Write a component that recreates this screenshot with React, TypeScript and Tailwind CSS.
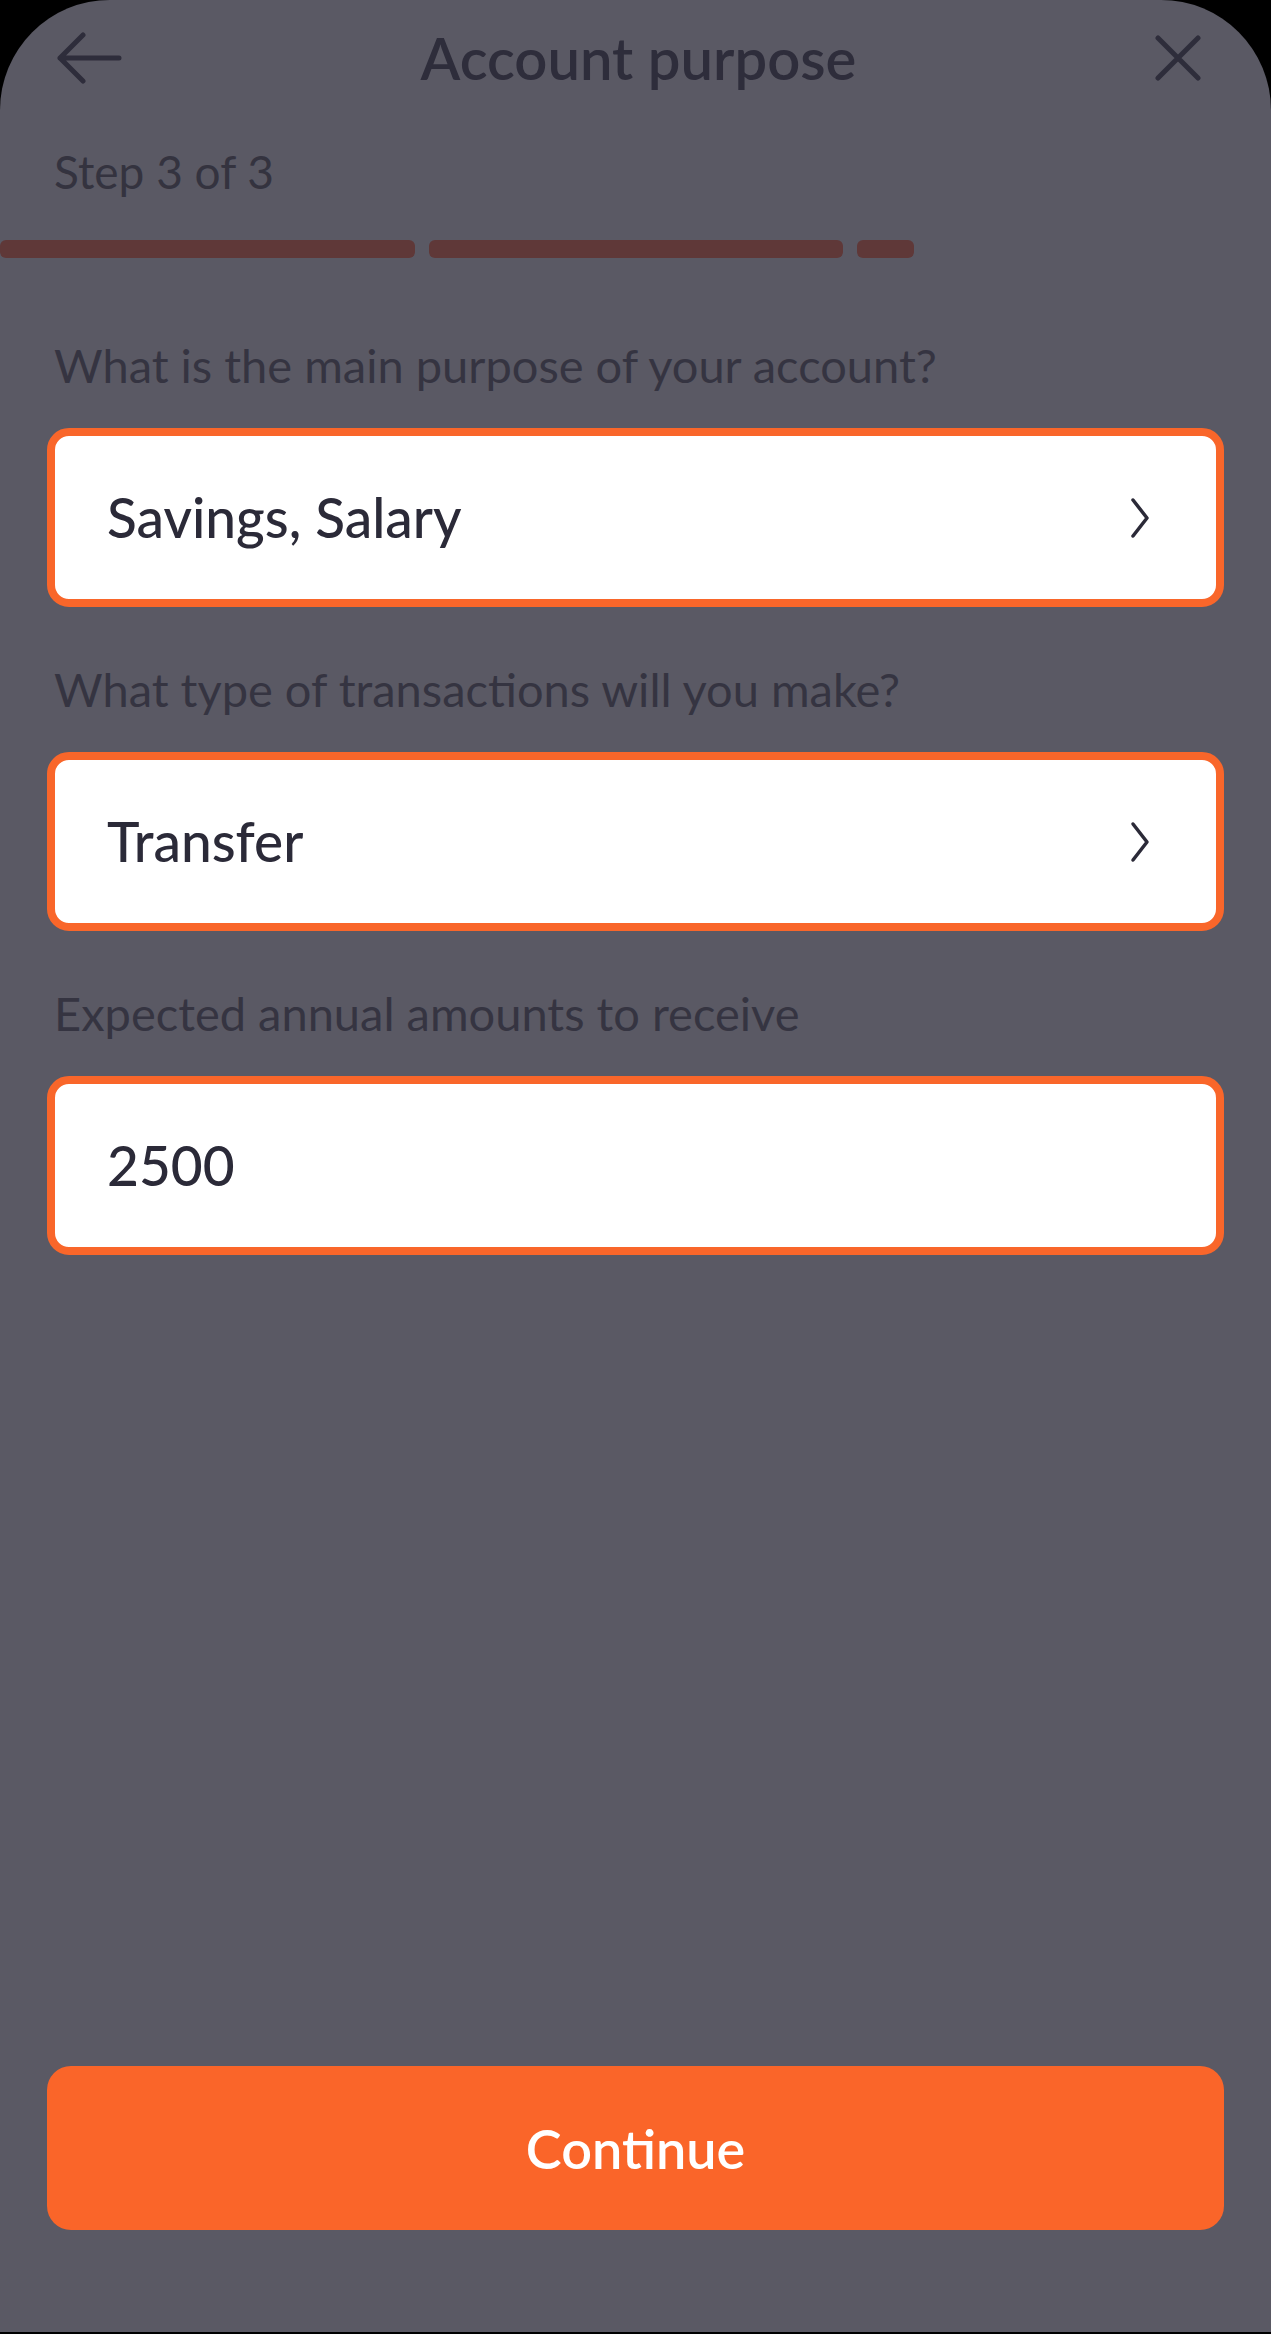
const fields = [
  { label: 'What is the main purpose of your account?', value: 'Savings, Salary', select: true },
  { label: 'What type of transactions will you make?', value: 'Transfer', select: true },
  { label: 'Expected annual amounts to receive', value: '2500', select: false },
]

export default function App() {
  return (
    <div className="w-full h-[2334px] bg-black" style={{ fontFamily: 'Lato, "Open Sans", sans-serif' }}>
      <div className="h-full flex flex-col bg-[#5a5964] rounded-t-[110px] border-b-2 border-black">
        {/* Header */}
        <header className="h-[116px] flex items-center justify-between pl-[56px] pr-[70px]">
          <svg width="66" height="52" viewBox="0 0 66 52" fill="none" stroke="#2e2d3b" strokeWidth="5" strokeLinecap="round" strokeLinejoin="round">
            <path d="M63 26H4M27 3L4 26l23 23" />
          </svg>
          <h1 className="text-[58px] font-semibold text-[#2e2d3b] leading-none">Account purpose</h1>
          <svg width="46" height="46" viewBox="0 0 46 46" fill="none" stroke="#2e2d3b" strokeWidth="5" strokeLinecap="round">
            <path d="M3 3l40 40M43 3L3 43" />
          </svg>
        </header>

        {/* Step */}
        <p className="mt-[32px] px-[54px] text-[46px] leading-[48px] text-[#34333f]">Step 3 of 3</p>
        <div className="mt-[44px] h-[18px] flex gap-[14px] w-[914px]">
          <div className="flex-1 rounded-[6px] bg-[#5f3838]" />
          <div className="flex-1 rounded-[6px] bg-[#5f3838]" />
          <div className="w-[57px] rounded-[6px] bg-[#5f3838]" />
        </div>

        {/* Form */}
        <div className="mt-[83px] px-[47px] flex flex-col">
          {fields.map((f, i) => (
            <div key={i} className={i > 0 ? 'mt-[58px]' : ''}>
              <p className="px-[7px] text-[47px] leading-[48px] text-[#353441]">{f.label}</p>
              <div className="mt-[39px] h-[179px] rounded-[22px] border-[8px] border-[#f9662a] bg-white flex items-center justify-between pl-[52px] pr-[66px]">
                <span className="text-[55px] font-medium text-[#2b2a38]">{f.value}</span>
                {f.select && (
                  <svg width="20" height="42" viewBox="0 0 20 42" fill="none" stroke="#2b2a38" strokeWidth="3.5" strokeLinecap="round" strokeLinejoin="round">
                    <path d="M3 3l14 18L3 39" />
                  </svg>
                )}
              </div>
            </div>
          ))}
        </div>

        {/* Continue */}
        <div className="mt-auto px-[47px] pb-[102px]">
          <button className="w-full h-[164px] rounded-[24px] bg-[#fa6529] text-white text-[54px] font-semibold">
            Continue
          </button>
        </div>
      </div>
    </div>
  )
}
